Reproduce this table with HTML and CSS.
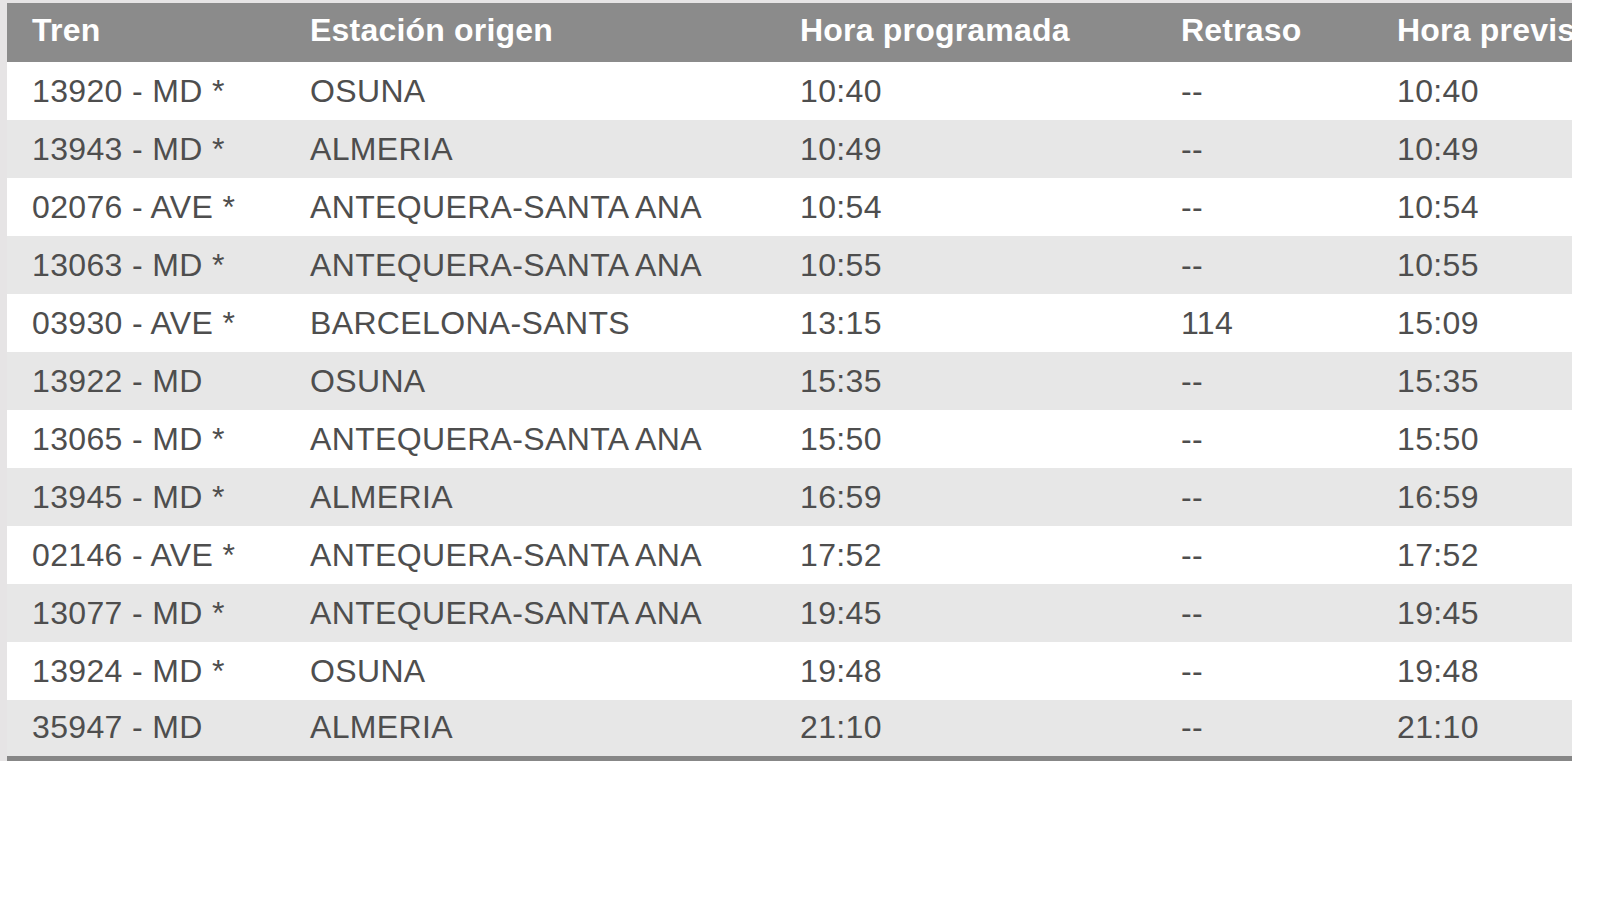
FILE: index.html
```html
<!DOCTYPE html>
<html lang="es">
<head>
<meta charset="utf-8">
<title>Llegadas</title>
<link rel="stylesheet" href="styles.css">
</head>
<body>
<div class="frame">
  <div class="clip">
    <table class="trains">
      <colgroup>
        <col class="c1"><col class="c2"><col class="c3"><col class="c4"><col class="c5">
      </colgroup>
      <thead>
        <tr><th>Tren</th><th>Estación origen</th><th>Hora programada</th><th>Retraso</th><th>Hora prevista</th></tr>
      </thead>
      <tbody>
        <tr><td>13920 - MD *</td><td>OSUNA</td><td>10:40</td><td>--</td><td>10:40</td></tr>
        <tr><td>13943 - MD *</td><td>ALMERIA</td><td>10:49</td><td>--</td><td>10:49</td></tr>
        <tr><td>02076 - AVE *</td><td>ANTEQUERA-SANTA ANA</td><td>10:54</td><td>--</td><td>10:54</td></tr>
        <tr><td>13063 - MD *</td><td>ANTEQUERA-SANTA ANA</td><td>10:55</td><td>--</td><td>10:55</td></tr>
        <tr><td>03930 - AVE *</td><td>BARCELONA-SANTS</td><td>13:15</td><td>114</td><td>15:09</td></tr>
        <tr><td>13922 - MD</td><td>OSUNA</td><td>15:35</td><td>--</td><td>15:35</td></tr>
        <tr><td>13065 - MD *</td><td>ANTEQUERA-SANTA ANA</td><td>15:50</td><td>--</td><td>15:50</td></tr>
        <tr><td>13945 - MD *</td><td>ALMERIA</td><td>16:59</td><td>--</td><td>16:59</td></tr>
        <tr><td>02146 - AVE *</td><td>ANTEQUERA-SANTA ANA</td><td>17:52</td><td>--</td><td>17:52</td></tr>
        <tr><td>13077 - MD *</td><td>ANTEQUERA-SANTA ANA</td><td>19:45</td><td>--</td><td>19:45</td></tr>
        <tr><td>13924 - MD *</td><td>OSUNA</td><td>19:48</td><td>--</td><td>19:48</td></tr>
        <tr><td>35947 - MD</td><td>ALMERIA</td><td>21:10</td><td>--</td><td>21:10</td></tr>
      </tbody>
    </table>
  </div>
</div>
</body>
</html>
```
FILE: styles.css
```css
html, body {
  margin: 0;
  padding: 0;
  background: #ffffff;
}

.frame {
  width: 1565px;
  padding: 3px 0 0 7px;
  background: #e6e4e5;
}

.clip {
  width: 1565px;
  overflow: hidden;
  background: #ffffff;
}

.trains {
  width: 1700px;
  table-layout: fixed;
  border-collapse: collapse;
  font-family: "Liberation Sans", Arial, sans-serif;
  font-size: 32px;
  letter-spacing: 0.35px;
}

.c1 { width: 278px; }
.c2 { width: 490px; }
.c3 { width: 381px; }
.c4 { width: 216px; }
.c5 { width: 335px; }

.trains th {
  height: 59px;
  padding: 0 0 4px 25px;
  background: #8b8b8b;
  color: #ffffff;
  font-weight: bold;
  letter-spacing: 0.2px;
  text-align: left;
  white-space: nowrap;
  box-sizing: border-box;
}

.trains td {
  height: 58px;
  padding: 0 0 0 25px;
  color: #4e4e4e;
  text-align: left;
  white-space: nowrap;
  box-sizing: border-box;
}

.trains tbody tr:nth-child(even) td {
  background: #e7e7e7;
}

.trains tbody tr:last-child td {
  border-bottom: 5px solid #878787;
}
```
